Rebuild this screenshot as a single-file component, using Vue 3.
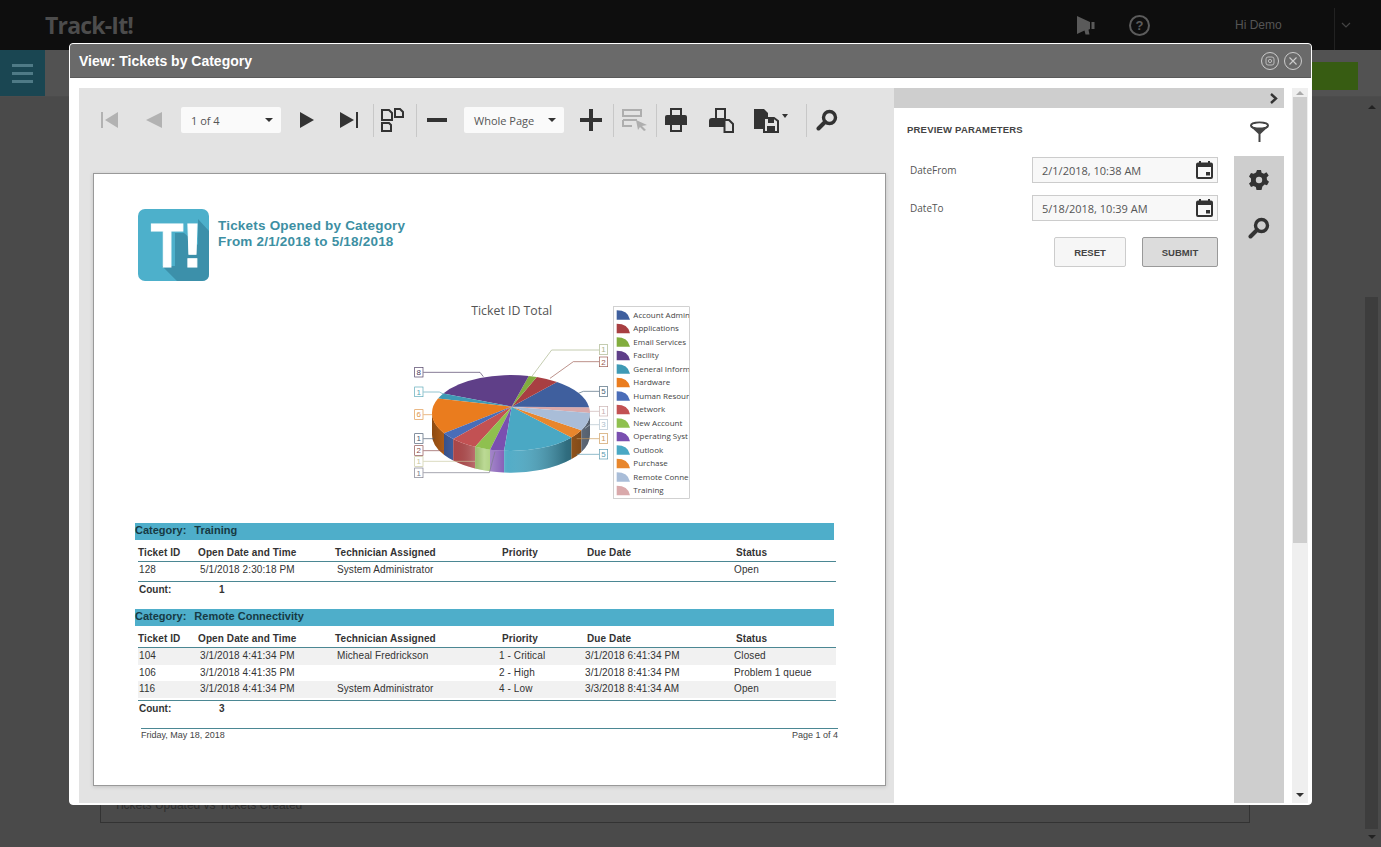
<template>
  <div class="app">
    <!-- page behind the modal, dimmed by the overlay -->
    <header class="topbar">
      <span class="brand">Track-It!</span>
      <svg class="top-icon" width="20" height="19" viewBox="0 0 20 19">
        <path d="M1 0 L14 6 V13 L12.5 13.8 L13.5 18.5 L9.5 18.5 L8.5 14.6 L1 18 Z" fill="#5a5a5a" />
        <rect x="15.5" y="6" width="3" height="7" fill="#5a5a5a" />
      </svg>
      <span class="help">?</span>
      <span class="hi">Hi Demo</span>
      <span class="top-div"></span>
      <svg width="10" height="6" viewBox="0 0 10 6" class="top-chev"><path d="M1 1 L5 5 L9 1" fill="none" stroke="#444" stroke-width="1.2" /></svg>
    </header>
    <div class="subbar">
      <div class="burger"><i></i><i></i><i></i></div>
      <div class="new-btn">New</div>
    </div>
    <div class="main">
      <div class="bg-box"><span>Tickets Updated vs Tickets Created</span></div>
      <div class="bg-scroll">
        <i class="bg-arrow bg-arrow--up"></i>
        <span class="bg-thumb"></span>
        <i class="bg-arrow bg-arrow--down"></i>
      </div>
    </div>

    <section class="modal">
      <div class="modal__head">
        <span class="modal__title">View: Tickets by Category</span>
        <span class="round-btn">
          <svg width="10" height="10" viewBox="0 0 10 10"><rect x="1" y="1" width="8" height="8" rx="2" fill="none" stroke="#bbb" /><circle cx="5" cy="5" r="1.6" fill="none" stroke="#bbb" /></svg>
        </span>
        <span class="round-btn">
          <svg width="10" height="10" viewBox="0 0 10 10"><path d="M1.5 1.5 L8.5 8.5 M8.5 1.5 L1.5 8.5" stroke="#ccc" stroke-width="1.1" /></svg>
        </span>
      </div>

      <div class="modal__body">
        <div class="viewer">
          <div class="toolbar">
            <button class="tb w44" type="button">
              <svg width="20" height="18" viewBox="0 0 20 18"><rect x="1" y="1" width="2" height="16" fill="#b2b2b2" /><path d="M18 1 V17 L5 9 Z" fill="#b2b2b2" /></svg>
            </button>
            <button class="tb w44" type="button">
              <svg width="18" height="18" viewBox="0 0 18 18"><path d="M17 1 V17 L1 9 Z" fill="#b2b2b2" /></svg>
            </button>
            <div class="select select--page"><span>1 of 4</span><i class="caret"></i></div>
            <button class="tb w52" type="button">
              <svg width="16" height="18" viewBox="0 0 16 18"><path d="M1 1 V17 L15 9 Z" fill="#333" /></svg>
            </button>
            <button class="tb w32" type="button">
              <svg width="20" height="18" viewBox="0 0 20 18"><path d="M1 1 V17 L15 9 Z" fill="#333" /><rect x="17" y="1" width="2" height="16" fill="#333" /></svg>
            </button>
            <span class="sep sep--m8"></span>
            <button class="tb w38" type="button">
              <svg width="24" height="24" viewBox="0 0 24 24" fill="none" stroke="#333" stroke-width="2">
                <path d="M2 2 H9 L12 5 V12 H2 Z" /><path d="M15 1 H20 L23 4 V9 H15 Z" /><path d="M2 15 H9 L11 17 V23 H2 Z" />
              </svg>
            </button>
            <span class="sep sep--m5"></span>
            <button class="tb w42" type="button">
              <svg width="22" height="6" viewBox="0 0 22 6"><rect x="1" y="1" width="20" height="4" fill="#333" /></svg>
            </button>
            <div class="select select--zoom"><span>Whole Page</span><i class="caret"></i></div>
            <button class="tb w44 ml5" type="button">
              <svg width="22" height="22" viewBox="0 0 22 22"><path d="M9 0 H13 V9 H22 V13 H13 V22 H9 V13 H0 V9 H9 Z" fill="#333" /></svg>
            </button>
            <span class="sep"></span>
            <button class="tb w43" type="button">
              <svg width="26" height="22" viewBox="0 0 26 22" fill="none" stroke="#aeaeae" stroke-width="2">
                <rect x="1" y="1" width="18" height="6" /><path d="M1 11 H15 M1 11 V17 H10" />
                <path d="M14 11 L25 16 L20 17 L24 21 L22 22 L18 18 L16 21 Z" fill="#aeaeae" stroke="none" />
              </svg>
            </button>
            <span class="sep"></span>
            <button class="tb w40" type="button">
              <svg width="22" height="24" viewBox="0 0 22 24">
                <rect x="6" y="1" width="10" height="10" fill="none" stroke="#333" stroke-width="2" />
                <path d="M2 7 H20 Q22 7 22 9 V17 H0 V9 Q0 7 2 7 Z" fill="#333" />
                <rect x="6" y="16" width="10" height="7" fill="#e3e3e3" stroke="#333" stroke-width="2" />
              </svg>
            </button>
            <button class="tb w50" type="button">
              <svg width="25" height="25" viewBox="0 0 25 25">
                <rect x="7" y="1" width="9" height="10" fill="none" stroke="#333" stroke-width="2" />
                <path d="M3 10 H16 V19 H0 V13 Q0 10 3 10 Z" fill="#333" />
                <path d="M15.5 12 H20 L24 16 V24 H15.5 Z" fill="#e3e3e3" stroke="#333" stroke-width="2" />
              </svg>
            </button>
            <button class="tb w40" type="button">
              <svg width="26" height="25" viewBox="0 0 26 25">
                <path d="M1 1 H11 L15 5 V9 H10 V21 H1 Z" fill="#333" />
                <path d="M11 10 H21 L25 13 V24 H11 Z" fill="#e3e3e3" stroke="#333" stroke-width="2" />
                <rect x="15" y="10" width="6" height="5" fill="#333" /><rect x="14" y="18" width="8" height="6" fill="#333" />
              </svg>
              <i class="caret caret--save"></i>
            </button>
            <span class="sep sep--m20"></span>
            <button class="tb w42" type="button">
              <svg width="22" height="22" viewBox="0 0 22 22" fill="none" stroke="#333">
                <circle cx="13.5" cy="8.5" r="6" stroke-width="3.4" /><path d="M9 13 L2.5 19.5" stroke-width="4" stroke-linecap="round" />
              </svg>
            </button>
          </div>

          <div class="sheet">
            <div class="sheet__head">
              <svg class="logo" width="71" height="72" viewBox="0 0 71 72">
                <rect width="71" height="72" rx="7" fill="#4db0cb" />
                <path d="M24 57 L39 72 H64 Q71 72 71 65 V22 L60 10 V36 L46 24 H37 V57 Z" fill="#3c90aa" />
                <text x="15" y="58" class="logo__t" transform="scale(0.85 1)">T</text>
                <text x="44" y="58" class="logo__t">!</text>
              </svg>
              <div class="sheet__title">
                <div>Tickets Opened by Category</div>
                <div>From 2/1/2018 to 5/18/2018</div>
              </div>
            </div>

            <svg class="chart" width="300" height="210" viewBox="0 0 900 630">
              <defs>
                <clipPath id="legend-clip"><rect x="640" y="35" width="228" height="575" /></clipPath>
                <linearGradient id="gloss" gradientUnits="userSpaceOnUse" x1="96" x2="570" y1="0" y2="0">
                  <stop offset="0" stop-color="#000" stop-opacity="0.4" />
                  <stop offset="0.15" stop-color="#000" stop-opacity="0.12" />
                  <stop offset="0.33" stop-color="#fff" stop-opacity="0.4" />
                  <stop offset="0.48" stop-color="#fff" stop-opacity="0.05" />
                  <stop offset="0.85" stop-color="#000" stop-opacity="0.35" />
                  <stop offset="1" stop-color="#000" stop-opacity="0.5" />
                </linearGradient>
              </defs>
              <text x="335" y="59" class="chart__title">Ticket ID Total</text>

              <!-- side wall with a shared gloss, then top face -->
              <g v-for="s in slices" :key="'w' + s.id">
                <path v-if="s.wall" :d="s.wall" :fill="s.color" />
                <path v-if="s.wall" :d="s.wall" fill="url(#gloss)" />
              </g>
              <path v-for="s in slices" :key="'t' + s.id" :d="s.top" :fill="s.color" />

              <g v-for="l in callouts" :key="l.y + l.text + l.x">
                <polyline :points="l.line" fill="none" :stroke="l.color" stroke-width="2" />
                <rect :x="l.x" :y="l.y" width="25" height="29" fill="#fff" :stroke="l.color" stroke-width="2" />
                <text :x="l.x + 12.5" :y="l.y + 23" class="chart__num" :fill="l.color">{{ l.text }}</text>
              </g>

              <rect x="640" y="35" width="228" height="575" fill="#fff" stroke="#bbb" stroke-width="2" />
              <g clip-path="url(#legend-clip)">
                <g v-for="(s, i) in legend" :key="s.name">
                  <path :d="swatch(60 + i * 40.5)" :fill="s.color" />
                  <text x="700" :y="68 + i * 40.5" class="chart__legend">{{ s.name }}</text>
                </g>
              </g>
            </svg>

            <div
              v-for="(group, gi) in groups"
              :key="group.name"
              class="group"
              :class="{ 'group--striped': gi === groups.length - 1 }"
            >
              <div class="band"><span>Category:</span><span>{{ group.name }}</span></div>
              <div class="t-head">
                <span v-for="c in columns" :key="c">{{ c }}</span>
              </div>
              <div class="t-rows">
                <div v-for="row in group.rows" :key="row[0]" class="t-row">
                  <span v-for="(cell, i) in row" :key="i">{{ cell }}</span>
                </div>
              </div>
              <div class="t-count"><span>Count:</span><span>{{ group.rows.length }}</span></div>
            </div>

            <div class="sheet__foot">
              <span>Friday, May 18, 2018</span>
              <span>Page 1 of 4</span>
            </div>
          </div>
        </div>

        <aside class="side">
          <div class="side__bar">
            <svg width="9" height="11" viewBox="0 0 9 11"><path d="M2 1 L7 5.5 L2 10" fill="none" stroke="#333" stroke-width="2.4" /></svg>
          </div>
          <div class="side__body">
            <div class="params">
              <div class="params__title">PREVIEW PARAMETERS</div>
              <div v-for="f in fields" :key="f.label" class="field">
                <label>{{ f.label }}</label>
                <div class="date">
                  <span>{{ f.value }}</span>
                  <svg width="17" height="18" viewBox="0 0 17 18">
                    <path d="M4 0 V3 M13 0 V3" stroke="#333" stroke-width="2" />
                    <rect x="1" y="2.5" width="15" height="14.5" rx="1" fill="none" stroke="#333" stroke-width="2" />
                    <rect x="1" y="2.5" width="15" height="3.5" fill="#333" /><rect x="10" y="11" width="4" height="3.5" fill="#333" />
                  </svg>
                </div>
              </div>
              <div class="actions">
                <button type="button" class="btn">RESET</button>
                <button type="button" class="btn btn--primary">SUBMIT</button>
              </div>
            </div>
            <div class="tabs">
              <div class="tab tab--active">
                <svg width="21" height="22" viewBox="0 0 21 22" fill="none" stroke="#444">
                  <ellipse cx="10.5" cy="4.5" rx="8.5" ry="3" stroke-width="2" />
                  <path d="M2 6 L9.5 13 V21 H11.5 V13 L19 6 Z" fill="#444" stroke="none" />
                  <ellipse cx="10.5" cy="4.5" rx="7" ry="2" fill="#fff" stroke="none" />
                </svg>
              </div>
              <div class="tab">
                <svg width="20" height="20" viewBox="0 0 20 20">
                  <path d="M8 0 H12 L12.6 2.8 L15 3.8 L17.4 2.3 L18 3 L19.7 5.6 L17.7 7.4 L18 10 L20 11.8 L18 15.2 L15.6 14.5 L13.4 16.5 L12.5 20 H7.5 L6.8 17 L4.5 16 L2 17 L0 13.6 L2 11.8 V8.4 L0 6.4 L2 3 L4.6 3.8 L7 2.6 Z" fill="#333" />
                  <circle cx="10" cy="10" r="3.2" fill="#cecece" />
                </svg>
              </div>
              <div class="tab">
                <svg width="22" height="22" viewBox="0 0 22 22" fill="none" stroke="#333">
                  <circle cx="13.5" cy="8.5" r="6" stroke-width="3.4" /><path d="M9 13 L2.5 19.5" stroke-width="4" stroke-linecap="round" />
                </svg>
              </div>
            </div>
          </div>
        </aside>

        <div class="scroll">
          <i class="scroll__up"></i>
          <span class="scroll__thumb"></span>
          <i class="scroll__down"></i>
        </div>
      </div>
    </section>
  </div>
</template>

<script setup>
// pie geometry is in the chart's own units (3x of the real pixels)
const cx = 333
const cy = 354
const rx = 237
const ry = 114
const apexX = 335
const apexY = 335
const depth = 65

const rawSlices = [
  ['#d9a9ab', -8.6, 0],
  ['#3f5f9e', -54.4, -8.6],
  ['#a83f42', -71, -54.4],
  ['#82ad3e', -77, -71],
  ['#5f3f88', -149, -77],
  ['#3f9ab5', -157.5, -149],
  ['#ea7c1e', 148, 202.5],
  ['#4a6db8', 137, 148],
  ['#c25153', 117, 137],
  ['#8fc04f', 105.4, 117],
  ['#7a4fb0', 95, 105.4],
  ['#4aa8c4', 40, 95],
  ['#e8862c', 27, 40],
  ['#a9bdd8', 0, 27],
]

function pt(deg, dy = 0) {
  const t = (deg * Math.PI) / 180
  return `${(cx + rx * Math.cos(t)).toFixed(1)} ${(cy + ry * Math.sin(t) + dy).toFixed(1)}`
}

const slices = rawSlices.map(([color, from, to], id) => {
  const large = to - from > 180 ? 1 : 0
  const top = `M${apexX} ${apexY} L${pt(from)} A${rx} ${ry} 0 ${large} 1 ${pt(to)} Z`
  const a = Math.max(from, 0)
  const b = Math.min(to, 180)
  let wall = null
  if (b > a) {
    wall = `M${pt(a)} A${rx} ${ry} 0 0 1 ${pt(b)} L${pt(b, depth)} A${rx} ${ry} 0 0 0 ${pt(a, depth)} Z`
  }
  return { id, color, top, wall }
})

const legend = [
  { name: 'Account Admin', color: '#3f5f9e' },
  { name: 'Applications', color: '#a83f42' },
  { name: 'Email Services', color: '#82ad3e' },
  { name: 'Facility', color: '#5f3f88' },
  { name: 'General Inform', color: '#3f9ab5' },
  { name: 'Hardware', color: '#ea7c1e' },
  { name: 'Human Resour', color: '#4a6db8' },
  { name: 'Network', color: '#c25153' },
  { name: 'New Account', color: '#8fc04f' },
  { name: 'Operating Syst', color: '#7a4fb0' },
  { name: 'Outlook', color: '#4aa8c4' },
  { name: 'Purchase', color: '#e8862c' },
  { name: 'Remote Conne', color: '#a9bdd8' },
  { name: 'Training', color: '#d9a9ab' },
]

const callouts = [
  { x: 598, y: 149, text: '1', color: '#a8b48a', line: '598,165 455,165 395,245' },
  { x: 598, y: 186, text: '2', color: '#9a5a50', line: '598,200 520,200 450,250' },
  { x: 598, y: 275, text: '5', color: '#4a6478', line: '598,289 550,289 535,295' },
  { x: 598, y: 334, text: '1', color: '#c8b0b0', line: '598,349 568,349' },
  { x: 598, y: 374, text: '3', color: '#b0c0cc', line: '598,389 570,389 555,400' },
  { x: 598, y: 416, text: '1', color: '#cc9a5a', line: '598,431 530,431' },
  { x: 598, y: 463, text: '5', color: '#5a9ab0', line: '598,478 530,478' },
  { x: 44, y: 217, text: '8', color: '#4a3a60', line: '70,232 240,232 250,245' },
  { x: 44, y: 276, text: '1', color: '#5aa8b8', line: '70,291 118,291 130,297' },
  { x: 44, y: 344, text: '6', color: '#e0964a', line: '70,359 97,359' },
  { x: 44, y: 416, text: '1', color: '#4a5a70', line: '70,431 103,431' },
  { x: 44, y: 452, text: '2', color: '#8a4a4a', line: '70,467 132,467' },
  { x: 44, y: 485, text: '1', color: '#c8c8a0', line: '70,499 225,499' },
  { x: 44, y: 519, text: '1', color: '#7a7a8a', line: '70,533 268,533 285,470' },
]

function swatch(y) {
  return `M650 ${y + 14} V${y - 14} Q684 ${y - 14} 690 ${y + 14} Z`
}

const columns = ['Ticket ID', 'Open Date and Time', 'Technician Assigned', 'Priority', 'Due Date', 'Status']

const groups = [
  {
    name: 'Training',
    rows: [['128', '5/1/2018 2:30:18 PM', 'System Administrator', '', '', 'Open']],
  },
  {
    name: 'Remote Connectivity',
    rows: [
      ['104', '3/1/2018 4:41:34 PM', 'Micheal Fredrickson', '1 - Critical', '3/1/2018 6:41:34 PM', 'Closed'],
      ['106', '3/1/2018 4:41:35 PM', '', '2 - High', '3/1/2018 8:41:34 PM', 'Problem 1 queue'],
      ['116', '3/1/2018 4:41:34 PM', 'System Administrator', '4 - Low', '3/3/2018 8:41:34 AM', 'Open'],
    ],
  },
]

const fields = [
  { label: 'DateFrom', value: '2/1/2018, 10:38 AM' },
  { label: 'DateTo', value: '5/18/2018, 10:39 AM' },
]
</script>

<style>
html, body { margin: 0; background: #4a4a4a; }
</style>

<style scoped>
.app {
  position: relative;
  width: 1381px;
  height: 847px;
  overflow: hidden;
  background: #4a4a4a;
  font-family: "Liberation Sans", Arial, sans-serif;
}

.topbar {
  display: flex;
  align-items: center;
  height: 50px;
  background: #0e0e0e;
  padding-left: 45px;
  box-sizing: border-box;
}
.brand {
  font-family: "Open Sans", sans-serif;
  font-size: 23px;
  font-weight: 700;
  letter-spacing: -0.8px;
  color: #4c4c4c;
  width: 1031px;
}
.help {
  width: 17px;
  height: 17px;
  margin-left: 33px;
  border: 2px solid #5c5c5c;
  border-radius: 50%;
  text-align: center;
  line-height: 17px;
  font-size: 13px;
  font-weight: 700;
  color: #5c5c5c;
}
.hi {
  margin-left: 85px;
  font-size: 12px;
  color: #555;
  width: 99px;
}
.top-div {
  width: 1px;
  height: 42px;
  margin-top: 8px;
  background: #222;
}
.top-chev { margin-left: 6px; }

.subbar {
  display: flex;
  justify-content: space-between;
  height: 47px;
  background: #525252;
  border-bottom: 1px solid #4c4c4c;
  box-sizing: border-box;
}
.burger {
  display: flex;
  flex-direction: column;
  justify-content: center;
  gap: 5px;
  width: 45px;
  padding: 0 12px;
  box-sizing: border-box;
  background: #1a4652;
}
.burger i {
  height: 3px;
  background: #4f7a86;
}
.new-btn {
  width: 92px;
  height: 28px;
  margin: 12px 23px 0 0;
  padding: 6px 0 0 0;
  box-sizing: border-box;
  background: #375c12;
  color: #5f7d45;
  font-size: 12px;
}

.main {
  display: flex;
  height: 750px;
  padding: 0 3px 0 100px;
  box-sizing: border-box;
}
.bg-box {
  width: 1150px;
  height: 726px;
  padding: 701px 0 0 13px;
  box-sizing: border-box;
  border: 1px solid #333;
  border-top: 0;
  font-size: 12px;
  line-height: 14px;
  color: #2e2e2e;
}
.bg-scroll {
  display: flex;
  flex-direction: column;
  align-items: center;
  width: 13px;
  height: 742px;
  margin-left: 115px;
}
.bg-thumb {
  width: 13px;
  height: 532px;
  margin-top: auto;
  background: #3d3d3d;
}
.bg-arrow {
  width: 0;
  height: 0;
  border-left: 4px solid transparent;
  border-right: 4px solid transparent;
}
.bg-arrow--up {
  margin-top: 8px;
  border-bottom: 4px solid #222;
}
.bg-arrow--down {
  margin-top: 6px;
  border-top: 4px solid #222;
}

.modal {
  position: absolute;
  left: 69px;
  top: 43px;
  width: 1243px;
  height: 762px;
  box-sizing: border-box;
  background: #fff;
  border: 1px solid #fff;
  border-radius: 4px;
  overflow: hidden;
}
.modal__head {
  display: flex;
  align-items: center;
  gap: 4px;
  height: 34px;
  padding: 0 9px;
  box-sizing: border-box;
  background: #6a6a6a;
  border-bottom: 1px solid #5a5a5a;
}
.modal__title {
  flex: 1;
  font-size: 14px;
  font-weight: 700;
  color: #fff;
}
.round-btn {
  display: flex;
  align-items: center;
  justify-content: center;
  width: 16px;
  height: 16px;
  border: 1px solid #ccc;
  border-radius: 50%;
  margin-left: 1px;
}
.modal__body {
  display: flex;
  height: 725px;
  padding: 10px 0 0 9px;
  box-sizing: border-box;
}

.viewer {
  width: 815px;
  height: 715px;
  background: #e3e3e3;
}
.toolbar {
  display: flex;
  align-items: center;
  height: 64px;
  padding-left: 9px;
  margin-bottom: 21px;
}
.tb {
  position: relative;
  display: flex;
  align-items: center;
  justify-content: center;
  height: 30px;
  padding: 0;
  border: 0;
  background: none;
}
.w32 { width: 32px; }
.w38 { width: 38px; }
.w40 { width: 40px; }
.w42 { width: 42px; }
.w43 { width: 43px; }
.w44 { width: 44px; }
.w50 { width: 50px; }
.w52 { width: 52px; }
.ml5 { margin-left: 5px; }
.sep {
  width: 1px;
  height: 33px;
  margin-right: -1px;
  background: #c8c8c8;
}
.sep--m5 { margin-left: 5px; }
.sep--m8 { margin-left: 8px; }
.sep--m20 { margin-left: 20px; }
.select {
  display: flex;
  align-items: center;
  justify-content: space-between;
  width: 100px;
  height: 26px;
  padding: 0 8px 0 10px;
  box-sizing: border-box;
  background: #fafafa;
  border-radius: 2px;
  font-family: "Open Sans", sans-serif;
  font-size: 11px;
  color: #555;
}
.select--page { margin-left: 5px; }
.select--zoom { margin-left: 6px; }
.caret {
  width: 0;
  height: 0;
  border-left: 4px solid transparent;
  border-right: 4px solid transparent;
  border-top: 4px solid #333;
}
.caret--save {
  position: absolute;
  left: 36px;
  top: 9px;
  border-left-width: 3.5px;
  border-right-width: 3.5px;
}

.sheet {
  width: 793px;
  height: 613px;
  margin-left: 14px;
  padding-top: 35px;
  box-sizing: border-box;
  background: #fff;
  border: 1px solid #999;
  box-shadow: 0 1px 4px rgba(0, 0, 0, 0.15);
}
.sheet__head {
  display: flex;
  height: 72px;
  margin-left: 44px;
}
.logo__t {
  font-family: "Liberation Sans", sans-serif;
  font-size: 63px;
  font-weight: 700;
  fill: #fff;
  stroke: #fff;
  stroke-width: 1;
}
.sheet__title {
  margin: 9px 0 0 9px;
  font-size: 13.5px;
  font-weight: 700;
  line-height: 16px;
  letter-spacing: 0.2px;
  color: #3d8fa3;
}
.chart {
  display: block;
  margin: 14px 0 18px 306px;
}
.chart__title {
  font-family: "Open Sans", sans-serif;
  font-size: 37px;
  text-anchor: middle;
  fill: #555;
}
.chart__num {
  font-family: "Liberation Sans", sans-serif;
  font-size: 24px;
  text-anchor: middle;
}
.chart__legend {
  font-family: "Open Sans", sans-serif;
  font-size: 24px;
  fill: #444;
}

.group {
  margin-left: 41px;
  width: 703px;
  height: 86px;
  font-size: 10px;
  color: #333;
}
.group--striped { height: 119px; }
.band {
  display: flex;
  gap: 8px;
  height: 17px;
  width: 699px;
  line-height: 15px;
  background: #4eaeca;
  font-size: 11px;
  font-weight: 700;
  color: #173a44;
}
.t-head,
.t-count {
  display: grid;
  grid-template-columns: 60px 137px 167px 85px 149px 1fr;
  margin-left: 3px;
  font-weight: 700;
}
.t-head {
  width: 698px;
  height: 21px;
  line-height: 26px;
  border-bottom: 1px solid #4b8793;
  letter-spacing: 0.1px;
}
.t-rows {
  width: 698px;
  min-height: 18px;
  margin-left: 3px;
  padding-bottom: 1px;
  border-bottom: 1px solid #4b8793;
}
.group--striped .t-rows { padding-bottom: 2.5px; }
.t-row {
  display: grid;
  grid-template-columns: 61px 137px 162px 86px 149px 1fr;
  height: 16.5px;
  line-height: 16px;
  padding-left: 1px;
  letter-spacing: 0.1px;
  white-space: nowrap;
}
.group--striped .t-row:nth-child(odd) {
  background: #f1f1f1;
}
.t-count {
  grid-template-columns: 80px 1fr;
  height: 15px;
  line-height: 15px;
  margin-left: 4px;
  letter-spacing: 0;
}
.sheet__foot {
  display: flex;
  justify-content: space-between;
  width: 697px;
  margin-left: 47px;
  border-top: 1px solid #4b8793;
  font-size: 9px;
  line-height: 12px;
  color: #444;
}

.side {
  width: 390px;
  display: flex;
  flex-direction: column;
}
.side__bar {
  display: flex;
  align-items: center;
  justify-content: flex-end;
  height: 20px;
  padding-right: 6px;
  box-sizing: border-box;
  background: #cecece;
}
.side__body {
  display: flex;
  flex: 1;
}
.params {
  width: 340px;
  padding: 16px 16px 0 13px;
  box-sizing: border-box;
}
.params__title {
  font-size: 9.5px;
  font-weight: 700;
  line-height: 12px;
  letter-spacing: 0.2px;
  color: #444;
  margin-bottom: 21px;
}
.field {
  display: flex;
  align-items: center;
  justify-content: space-between;
  height: 26px;
  margin-bottom: 12px;
}
.field label {
  padding-left: 3px;
  font-family: "Open Sans", sans-serif;
  font-size: 10px;
  color: #555;
}
.date {
  display: flex;
  align-items: center;
  justify-content: space-between;
  width: 186px;
  height: 26px;
  padding: 0 4px 0 9px;
  box-sizing: border-box;
  background: #f8f8f8;
  border: 1px solid #ccc;
  font-family: "Open Sans", sans-serif;
  font-size: 11px;
  color: #555;
}
.actions {
  display: flex;
  justify-content: flex-end;
  gap: 16px;
  margin-top: 16px;
}
.btn {
  width: 72px;
  height: 30px;
  padding: 0;
  background: #f6f6f6;
  border: 1px solid #ccc;
  border-radius: 2px;
  font-family: "Liberation Sans", sans-serif;
  font-size: 9.5px;
  font-weight: 700;
  color: #444;
}
.btn--primary {
  width: 76px;
  background: #dcdcdc;
  border-color: #999;
}
.tabs {
  width: 50px;
  background: #cecece;
}
.tab {
  display: flex;
  align-items: center;
  justify-content: center;
  height: 48px;
}
.tab--active { background: #fff; }

.scroll {
  display: flex;
  flex-direction: column;
  width: 16px;
  height: 715px;
  margin-left: 8px;
  background: #efefef;
}
.scroll__thumb {
  display: block;
  width: 14px;
  height: 446px;
  margin-left: 1px;
  background: #cecece;
}
.scroll__up,
.scroll__down {
  width: 0;
  height: 0;
  margin: 3px 0 2px 4px;
  border-left: 4px solid transparent;
  border-right: 4px solid transparent;
}
.scroll__up { border-bottom: 4px solid #aaa; }
.scroll__down {
  margin-top: auto;
  margin-bottom: 6px;
  border-top: 4px solid #333;
}
</style>
